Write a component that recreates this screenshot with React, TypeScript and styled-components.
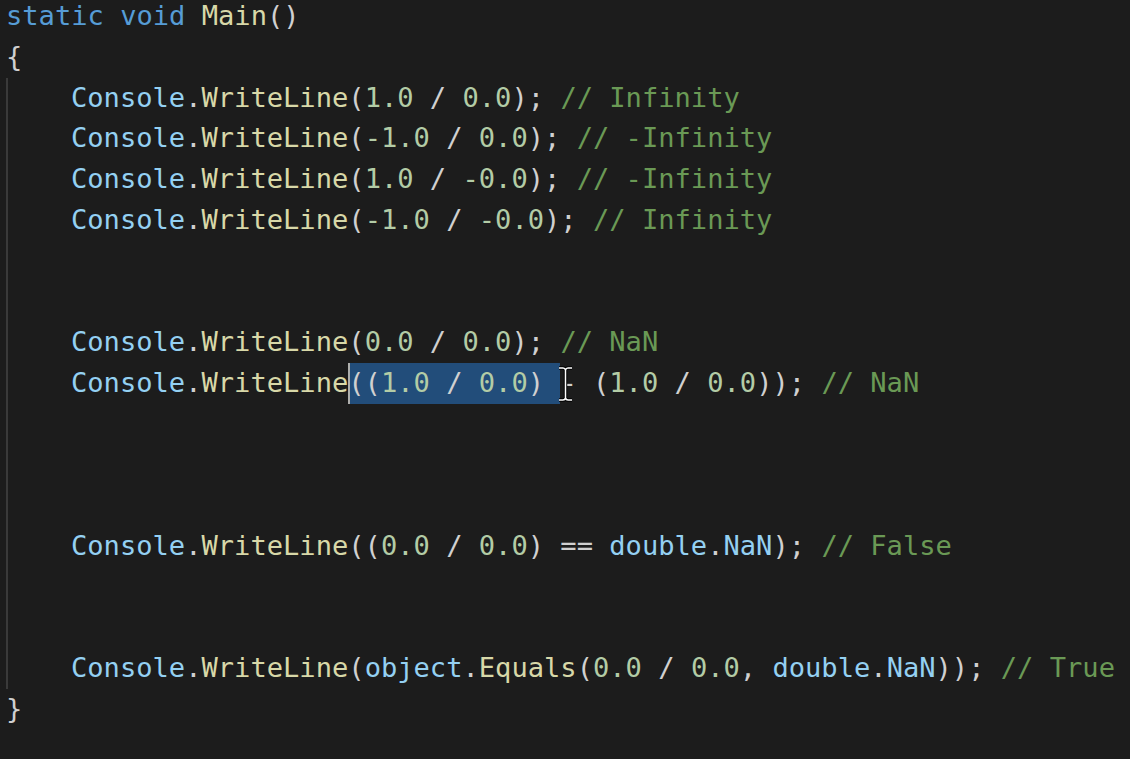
import React from "react";
import styled, { createGlobalStyle } from "styled-components";

const Global = createGlobalStyle`
  html, body { margin: 0; padding: 0; background: #1c1c1c; }
  body { overflow: hidden; }
`;

const C = {
  kw: "#569cd6",
  fn: "#d8d8a8",
  id: "#94d0f2",
  num: "#b3cca6",
  punc: "#d0d0d0",
  com: "#6a9955",
};

type Kind = keyof typeof C;

const Editor = styled.div`
  width: 1130px;
  height: 759px;
  background: #1c1c1c;
  font-family: "DejaVu Sans Mono", "Liberation Mono", monospace;
  font-size: 27.1px;
  display: flex;
  flex-direction: column;
  padding-left: 6px;
  box-sizing: border-box;
  overflow: hidden;
  position: relative;
`;

const Lines = styled.div`
  margin-top: -4px;
  display: flex;
  flex-direction: column;
`;

const Body = styled.div`
  display: flex;
  flex-direction: column;
  border-left: 2px solid #3a3a3a;
  padding-left: 63px;
`;

const Line = styled.div`
  height: 40.75px;
  line-height: 40.75px;
  white-space: pre;
  display: flex;
  align-items: center;
`;

const Tok = styled.span<{ $k: Kind }>`
  color: ${(p) => C[p.$k]};
`;

const Selection = styled.span`
  position: relative;
  display: inline-block;
  height: 40.75px;
  line-height: 40.75px;
  background: #224d7a;
  &::before {
    content: "";
    position: absolute;
    left: 0;
    top: 0;
    bottom: 0;
    width: 2px;
    background: #aeafad;
  }
`;

const Pointer = styled.svg`
  position: absolute;
  left: 556px;
  top: 366px;
`;

type T = [Kind, string];

const t = (k: Kind, s: string): T => [k, s];

const Toks = ({ toks }: { toks: T[] }) => (
  <>
    {toks.map(([k, s], i) => (
      <Tok key={i} $k={k}>
        {s}
      </Tok>
    ))}
  </>
);

const call = (...rest: T[]): T[] => [
  t("id", "Console"),
  t("punc", "."),
  t("fn", "WriteLine"),
  ...rest,
];

const div = (a: string, b: string): T[] => [
  t("num", a),
  t("punc", " / "),
  t("num", b),
];

const body: (T[] | null | "sel")[] = [
  call(t("punc", "("), ...div("1.0", "0.0"), t("punc", "); "), t("com", "// Infinity")),
  call(t("punc", "("), ...div("-1.0", "0.0"), t("punc", "); "), t("com", "// -Infinity")),
  call(t("punc", "("), ...div("1.0", "-0.0"), t("punc", "); "), t("com", "// -Infinity")),
  call(t("punc", "("), ...div("-1.0", "-0.0"), t("punc", "); "), t("com", "// Infinity")),
  null,
  null,
  call(t("punc", "("), ...div("0.0", "0.0"), t("punc", "); "), t("com", "// NaN")),
  "sel",
  null,
  null,
  null,
  call(
    t("punc", "(("),
    ...div("0.0", "0.0"),
    t("punc", ") == "),
    t("id", "double"),
    t("punc", "."),
    t("id", "NaN"),
    t("punc", "); "),
    t("com", "// False")
  ),
  null,
  null,
  call(
    t("punc", "("),
    t("id", "object"),
    t("punc", "."),
    t("fn", "Equals"),
    t("punc", "("),
    ...div("0.0", "0.0"),
    t("punc", ", "),
    t("id", "double"),
    t("punc", "."),
    t("id", "NaN"),
    t("punc", ")); "),
    t("com", "// True")
  ),
];

export default function App() {
  return (
    <Editor>
      <Global />
      <Lines>
        <Line>
          <Toks toks={[t("kw", "static"), t("punc", " "), t("kw", "void"), t("punc", " "), t("fn", "Main"), t("punc", "()")]} />
        </Line>
        <Line>
          <Tok $k="punc">{"{"}</Tok>
        </Line>
        <Body>
          {body.map((l, i) =>
            l === "sel" ? (
              <Line key={i}>
                <Toks toks={call()} />
                <Selection>
                  <Toks toks={[t("punc", "(("), ...div("1.0", "0.0"), t("punc", ") ")]} />
                </Selection>
                <Toks toks={[t("punc", "- ("), ...div("1.0", "0.0"), t("punc", ")); "), t("com", "// NaN")]} />
              </Line>
            ) : (
              <Line key={i}>{l ? <Toks toks={l} /> : " "}</Line>
            )
          )}
        </Body>
        <Line>
          <Tok $k="punc">{"}"}</Tok>
        </Line>
      </Lines>
      <Pointer width="20" height="36" viewBox="0 0 20 36">
        <path
          d="M3 2 H7 Q9 2 9.5 4 Q10 2 12 2 H16 M9.5 4 V32 M3 34 H7 Q9 34 9.5 32 Q10 34 12 34 H16"
          fill="none"
          stroke="#000"
          strokeWidth="3.5"
        />
        <path
          d="M3 2 H7 Q9 2 9.5 4 Q10 2 12 2 H16 M9.5 4 V32 M3 34 H7 Q9 34 9.5 32 Q10 34 12 34 H16"
          fill="none"
          stroke="#fff"
          strokeWidth="1.5"
        />
      </Pointer>
    </Editor>
  );
}
